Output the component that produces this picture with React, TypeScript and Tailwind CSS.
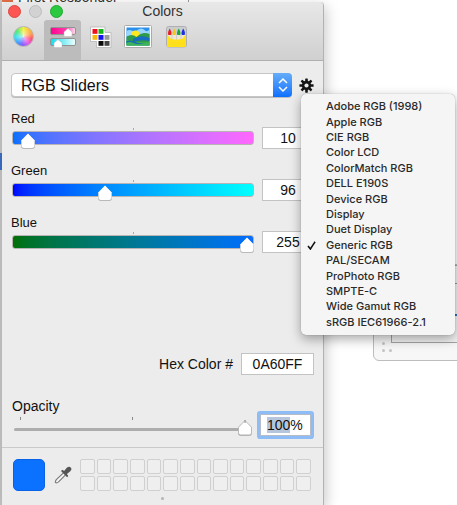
import { useEffect, useRef, useState } from "react";

const PROFILES = [
  "Adobe RGB (1998)",
  "Apple RGB",
  "CIE RGB",
  "Color LCD",
  "ColorMatch RGB",
  "DELL E190S",
  "Device RGB",
  "Display",
  "Duet Display",
  "Generic RGB",
  "PAL/SECAM",
  "ProPhoto RGB",
  "SMPTE-C",
  "Wide Gamut RGB",
  "sRGB IEC61966-2.1",
];

function Thumb({ outlined = false }: { outlined?: boolean }) {
  return (
    <svg viewBox="0 0 14 16" className="block h-4 w-[14px]" aria-hidden="true">
      <path d="M7 1 13.8 7.600v6q0 2.200-2.200 2.200H2.400Q.2 15.800.2 13.600v-6Z" fill="#a8a8a8" />
      <path
        d="M7 .5 13.500 7.200v5.600q0 2.100-2.100 2.100H2.600Q.5 14.900.5 12.800V7.200Z"
        fill="#fff"
        stroke={outlined ? "#b0b0b0" : "none"}
        strokeWidth=".8"
      />
      {outlined && <path d="M7 0v3" stroke="#888" />}
    </svg>
  );
}

function ThumbLayer({ value, max, outlined }: { value: number; max: number; outlined?: boolean }) {
  return (
    <div className="pointer-events-none absolute inset-x-0 top-[6px] mr-[14px]">
      <div className="relative w-full">
        <div className="absolute top-0" style={{ left: `${(value / max) * 100}%` }}>
          <Thumb outlined={outlined} />
        </div>
      </div>
    </div>
  );
}

function Channel({
  id,
  label,
  value,
  onChange,
  track,
}: {
  id: string;
  label: string;
  value: number;
  onChange: (v: number) => void;
  track: string;
}) {
  return (
    <div>
      <label htmlFor={id} className="block text-[13px] leading-4">
        {label}
      </label>
      <div className="flex h-[22px] items-center gap-2 pl-px">
        <div className="relative h-full flex-1">
          <div className="absolute top-px left-1/2 h-[2px] w-px bg-[#a8a8a8]" />
          <div className={`absolute inset-x-0 top-1 h-[14px] rounded-[3px] border border-[#b9b4b4] ${track}`} />
          <input
            id={id}
            type="range"
            min={0}
            max={255}
            value={value}
            onChange={(e) => onChange(Number(e.target.value))}
            className="absolute inset-0 h-full w-full opacity-0"
          />
          <ThumbLayer value={value} max={255} />
        </div>
        <input
          type="text"
          aria-label={`${label} value`}
          value={value}
          onChange={(e) => onChange(Math.min(255, Number(e.target.value) || 0))}
          className="h-[22px] w-[52px] border border-[#c3c3c3] bg-white text-center text-[14px] outline-none"
        />
      </div>
    </div>
  );
}

function SlidersIcon() {
  return (
    <svg viewBox="0 0 26 22" className="h-[22px] w-[26px]" aria-hidden="true">
      <defs>
        <linearGradient id="pk">
          <stop offset="0" stopColor="#ff0090" />
          <stop offset=".6" stopColor="#ff3aa8" />
          <stop offset="1" stopColor="#ffe0f0" />
        </linearGradient>
        <linearGradient id="cy">
          <stop offset="0" stopColor="#10dcea" />
          <stop offset=".5" stopColor="#7becf5" />
          <stop offset="1" stopColor="#f2ffff" />
        </linearGradient>
      </defs>
      <rect x=".5" y="1.500" width="25" height="7" rx="1.500" fill="url(#pk)" stroke="#929292" />
      <rect x=".5" y="12.500" width="25" height="7" rx="1.500" fill="url(#cy)" stroke="#929292" />
      <path d="m18 2.500 4 3.500v3.500q0 1-1 1h-6q-1 0-1-1V6Z" fill="#fff" stroke="#bbb" strokeWidth=".5" />
      <path d="m8 13.500 4 3.500v3.500q0 1-1 1H5q-1 0-1-1V17Z" fill="#fff" stroke="#bbb" strokeWidth=".5" />
    </svg>
  );
}

function PaletteIcon() {
  const cells: [number, number, string][] = [
    [2.5, 3, "#f00d1c"],
    [8.5, 3, "#16b51c"],
    [2.5, 9, "#f5b80d"],
    [8.5, 9, "#1414f0"],
    [14.5, 9, "#9a9a9a"],
    [8.5, 15, "#0a0a0a"],
    [14.5, 15, "#444"],
  ];
  return (
    <svg viewBox="0 0 22 22" className="h-[22px] w-[22px]" aria-hidden="true">
      <path d="M.5 1H15v5.500h6V21.500H6.500V15.500H.5Z" fill="#fff" stroke="#b4b4b4" strokeWidth=".8" />
      {cells.map(([x, y, c]) => (
        <rect key={`${x}-${y}`} x={x} y={y} width="5" height="4.800" fill={c} />
      ))}
    </svg>
  );
}

function ImageIcon() {
  return (
    <svg viewBox="0 0 28 23" className="h-[23px] w-[28px]" aria-hidden="true">
      <rect x=".5" y=".5" width="27" height="22" rx="1" fill="#fff" stroke="#aaa" />
      <rect x="2.500" y="2.500" width="23" height="18" fill="#2b90ea" />
      <path d="M2.500 6q3-2 6 0t5-1q4-3 7 0t5-1v7h-23Z" fill="#9ad6fb" />
      <circle cx="11.500" cy="9.500" r="4" fill="#ffe820" />
      <path d="M2.500 12q5-4 10 0 6-6 13-3v11.500h-23Z" fill="#2f9a4a" />
      <path d="M9 14q8-5 16.500-1v3q-8-2-16.500 1Z" fill="#166dc2" />
      <path d="M2.500 15q8 3 23 2v3.500h-23Z" fill="#3fb457" />
      <path d="M2.500 16q5-1 9 1t10 1q-8 2-12 0t-7 0Z" fill="#146bb8" />
    </svg>
  );
}

function PencilsIcon() {
  const pencils: [number, string][] = [
    [3.7, "#e51c2a"],
    [8.2, "#f7c51c"],
    [12.7, "#1aa53a"],
    [17.2, "#1b30e0"],
  ];
  return (
    <svg viewBox="0 0 21 22" className="h-[22px] w-[21px]" aria-hidden="true">
      <rect x=".5" y=".5" width="20" height="20.500" rx="2" fill="#c9ccd0" stroke="#b0b0b0" />
      {pencils.map(([x, c]) => (
        <g key={x}>
          <path d={`M${x - 1.8} 14V8.500L${x} 4l1.800 4.500V14Z`} fill="#f0e6cf" />
          <path d={`M${x} 2.500q2.600 4 1.400 6.500h-2.800Q${x - 2.4} 6.500 ${x} 2.500Z`} fill={c} />
        </g>
      ))}
      <path d="M1 9.500q1.500 0 2.500 2t7 2 7-2 2.500-2V20q0 1-1 1H2q-1 0-1-1Z" fill="#ffe01a" />
    </svg>
  );
}

function GearIcon() {
  return (
    <svg viewBox="0 0 16 16" className="h-[15px] w-[15px]" aria-hidden="true">
      <g fill="#151515">
        {[0, 45, 90, 135].map((a) => (
          <rect key={a} x="6.600" y="0.400" width="2.800" height="15.200" rx=".6" transform={`rotate(${a} 8 8)`} />
        ))}
        <circle cx="8" cy="8" r="5" />
      </g>
      <circle cx="8" cy="8" r="2.200" fill="#ececec" />
    </svg>
  );
}

function Eyedropper() {
  return (
    <svg viewBox="0 0 18 18" className="h-[18px] w-[18px]" aria-hidden="true">
      <path d="M9.500 6.800 2.300 13.600q-1.500 2.200-.7 3t3-.7l6.900-7" fill="#f4f4f4" stroke="#777" strokeWidth="1.100" />
      <path
        d="m7 5 1.400-1.200 1.700 1.300 2.700-3.300q2.200-2 3.900-.4t-.4 3.800L12.900 8l1.400 1.900-1.200 1.300Z"
        fill="#555"
      />
    </svg>
  );
}

export default function App() {
  const [red, setRed] = useState(10);
  const [green, setGreen] = useState(96);
  const [blue, setBlue] = useState(255);
  const [opacity, setOpacity] = useState(100);
  const [profile, setProfile] = useState("Generic RGB");
  const opacityField = useRef<HTMLInputElement>(null);

  useEffect(() => {
    opacityField.current?.focus();
    opacityField.current?.setSelectionRange(0, 3);
  }, []);

  const hex = [red, green, blue].map((v) => v.toString(16).padStart(2, "0")).join("").toUpperCase();

  return (
    <div className="relative min-h-screen overflow-hidden bg-white font-['Liberation_Sans',Arial,sans-serif] text-[#111]">
      {/* Windows lying behind the panel */}
      <div className="absolute -top-[11px] left-[18px] text-[14px] leading-4 whitespace-nowrap text-[#333]">
        First Responder
      </div>
      <div className="absolute top-0 left-0 h-[2px] w-[13px] bg-[#e0704a]" />
      <div className="absolute top-0 left-[188px] h-[2px] w-px bg-[#999]" />
      <div className="absolute inset-y-0 left-0 w-[2px] bg-[#c9c9c9]" />
      <div className="absolute top-[153px] left-0 h-[17px] w-[2px] bg-[#3f70c8]" />
      <div className="absolute top-[264px] -right-[20px] left-[373px] h-[97px] rounded-[6px] border border-[#bdbdbd] bg-[#f7f7f7]">
        <div className="absolute top-0 right-0 left-[17px] h-[78px] border border-[#a5a5a5] bg-[#f4f4f4]">
          <div className="mt-[17px] h-px bg-[#999]" />
          <div className="mt-[30px] h-[2px] bg-[#2d6db8]" />
        </div>
        <div className="absolute bottom-[15px] left-2 size-[3px] rounded-full bg-[#c4c4c4]" />
        <div className="absolute bottom-2 left-2 size-[3px] rounded-full bg-[#c4c4c4]" />
        <div className="absolute bottom-2 left-[15px] size-[3px] rounded-full bg-[#c4c4c4]" />
      </div>

      <main className="relative flex min-h-screen w-[324px] flex-col pt-[2px] pl-[2px]">
        <div className="flex flex-1 flex-col rounded-t-[4px] border-r border-[#b2b2b2] bg-[#ececec] shadow-[2px_4px_14px_rgba(0,0,0,0.22)]">
          <header className="rounded-t-[4px] border-b border-[#b0b0b0] bg-linear-to-b from-[#e8e8e8] to-[#d0d0d0]">
            <div className="grid h-[18px] grid-cols-[1fr_auto_1fr] items-center">
              <div className="flex gap-2 pl-[6px]">
                <button aria-label="Close" className="size-[13px] rounded-full border border-[#e0443e] bg-[#fc5654]" />
                <button aria-label="Minimize" className="size-[13px] rounded-full border border-[#bdbdbd] bg-[#d2d2d2]" />
                <button aria-label="Zoom" className="size-[13px] rounded-full border border-[#1fa82f] bg-[#2ac940]" />
              </div>
              <h1 className="text-[14px] leading-4 text-[#333]">Colors</h1>
            </div>
            <nav className="flex h-10 items-stretch">
              <button aria-label="Color wheel" className="flex w-[42px] items-center justify-center pb-2">
                <span className="size-[21px] rounded-full border border-[#b5b5b5] bg-[radial-gradient(circle,rgba(255,255,255,0.7),rgba(255,255,255,0.05)_60%),conic-gradient(#f5ee30,#ff9a40_70deg,#ff4a68_105deg,#e850e8_145deg,#7358ff_190deg,#3b9cff_225deg,#35dff0_265deg,#4ce870_310deg,#f5ee30)]" />
              </button>
              <button
                aria-label="Color sliders"
                aria-pressed="true"
                className="flex w-[37px] items-center justify-center rounded-t-[3px] bg-[#bcbcbc] pb-[7px]"
              >
                <SlidersIcon />
              </button>
              <button aria-label="Color palettes" className="flex w-[39px] items-center justify-center pb-[7px]">
                <PaletteIcon />
              </button>
              <button aria-label="Image palettes" className="flex w-[36px] items-center justify-center pb-[7px]">
                <ImageIcon />
              </button>
              <button aria-label="Pencils" className="flex w-[40px] items-center justify-center pb-[7px]">
                <PencilsIcon />
              </button>
            </nav>
          </header>

          <section className="pt-3 pr-[9px] pl-[9px]">
            <div className="flex items-center justify-between">
              <div className="relative w-[281px]">
                <select
                  aria-label="Slider mode"
                  className="block h-6 w-full appearance-none rounded-[4px] border border-[#c6c6c6] bg-white pl-[9px] text-[16px] shadow-[0_1px_0_#bcbcbc]"
                >
                  <option>RGB Sliders</option>
                </select>
                <span className="pointer-events-none absolute inset-y-0 right-0 flex w-[19px] items-center justify-center rounded-r-[4px] bg-linear-to-b from-[#65adf8] to-[#0a6fff]">
                  <svg viewBox="0 0 10 16" className="h-4 w-[10px]" fill="none" stroke="#fff" strokeWidth="1.500" aria-hidden="true">
                    <path d="m1 6 4-4 4 4M1 10l4 4 4-4" />
                  </svg>
                </span>
              </div>
              <button aria-label="Color space options">
                <GearIcon />
              </button>
            </div>

            <div className="mt-[14px] grid gap-[14px]">
              <Channel id="red" label="Red" value={red} onChange={setRed} track="bg-linear-to-r from-[#0070ff] to-[#ff66ff]" />
              <Channel id="green" label="Green" value={green} onChange={setGreen} track="bg-linear-to-r from-[#0000ff] to-[#00ffff]" />
              <Channel id="blue" label="Blue" value={blue} onChange={setBlue} track="bg-linear-to-r from-[#067000] to-[#0a6cff]" />
            </div>

            <div className="mt-[100px] flex items-center justify-end gap-2">
              <label htmlFor="hex" className="text-[14px] leading-4">
                Hex Color #
              </label>
              <input
                id="hex"
                value={hex}
                readOnly
                className="h-[22px] w-[73px] border border-[#c3c3c3] bg-white text-center text-[14px] outline-none"
              />
            </div>

            <div className="mt-[23px]">
              <label htmlFor="opacity" className="block pl-px text-[14px] leading-4">
                Opacity
              </label>
              <div className="flex h-[22px] items-center gap-2 pr-[3px] pl-px">
                <div className="relative h-full flex-1">
                  <div className="absolute top-[14px] right-2 left-[2px] h-[3px] rounded-full bg-[#adadad]" />
                  <div className="absolute top-[3px] left-2 h-[3px] w-px bg-[#888]" />
                  <div className="absolute top-[3px] left-1/2 h-[3px] w-px bg-[#888]" />
                  <input
                    id="opacity"
                    type="range"
                    min={0}
                    max={100}
                    value={opacity}
                    onChange={(e) => setOpacity(Number(e.target.value))}
                    className="absolute inset-0 h-full w-full opacity-0"
                  />
                  <ThumbLayer value={opacity} max={100} outlined />
                </div>
                <input
                  ref={opacityField}
                  aria-label="Opacity value"
                  value={`${opacity}%`}
                  onChange={(e) => setOpacity(Math.min(100, parseInt(e.target.value) || 0))}
                  className="h-[22px] w-[51px] rounded-[1px] border border-[#b5bcc8] bg-white pl-[6px] text-[14px] ring-3 ring-[#8ebcf7] outline-none selection:bg-[#b5c6dc] selection:text-[#111]"
                />
              </div>
            </div>
          </section>

          <footer className="mt-[11px] border-t border-[#c9c9c9] pt-[11px] pl-[11px]">
            <div className="flex items-center">
              <div className="size-8 rounded-[5px] border border-[#0a62e6] bg-[#0a72ff]" />
              <button aria-label="Pick a color from the screen" className="ml-[9px]">
                <Eyedropper />
              </button>
              <div className="ml-2 grid w-[231px] grid-cols-14 gap-[2px]">
                {Array.from({ length: 28 }, (_, i) => (
                  <div key={i} className="h-[15px] rounded-[2px] border border-[#d0d0d0] bg-[#efefef]" />
                ))}
              </div>
            </div>
            <div className="mt-[6px] mr-[11px] flex justify-center pb-1">
              <span className="size-[3px] rounded-full bg-[#b5b5b5]" />
            </div>
          </footer>
        </div>
      </main>

      <div
        role="menu"
        aria-label="Color space"
        className="absolute top-[94px] left-[301px] w-[154px] rounded-[5px] bg-[#f5f5f5] py-[5px] shadow-[0_4px_12px_rgba(0,0,0,0.35),0_0_1px_rgba(0,0,0,0.4)]"
      >
        <div className="grid h-[231px] grid-rows-[repeat(15,1fr)]">
          {PROFILES.map((name) => (
            <button
              key={name}
              role="menuitemradio"
              aria-checked={name === profile}
              onClick={() => setProfile(name)}
              className="flex items-center text-left font-['Inter','Liberation_Sans',sans-serif] text-[11px] leading-[15px] font-medium whitespace-nowrap text-[#2a2a2a]"
            >
              <span className="flex w-[25px] justify-center pr-[5px]">
                {name === profile && (
                  <svg viewBox="0 0 9 9" className="size-[9px]" fill="none" stroke="#111" strokeWidth="1.600" aria-hidden="true">
                    <path d="m1 5 2.400 3L8 .8" />
                  </svg>
                )}
              </span>
              {name}
            </button>
          ))}
        </div>
      </div>
    </div>
  );
}
